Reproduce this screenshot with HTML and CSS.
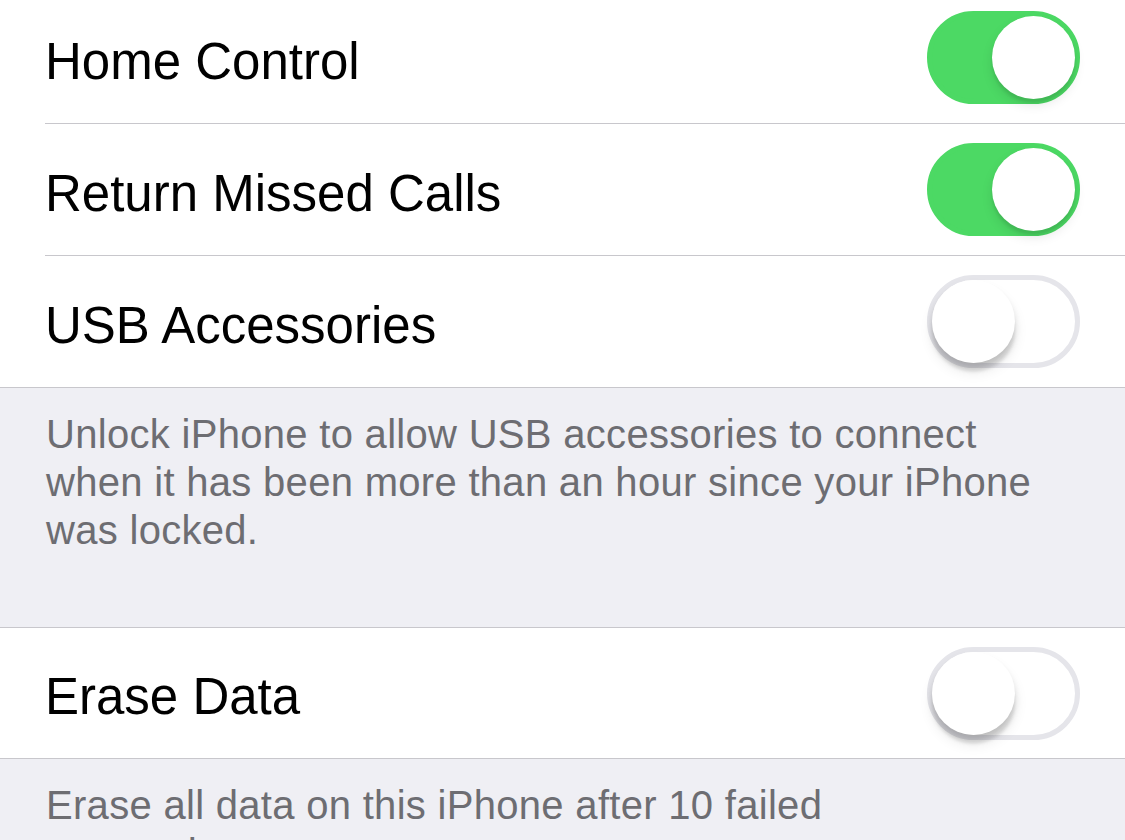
FILE: index.html
```html
<!DOCTYPE html>
<html lang="en">
<head>
<meta charset="utf-8">
<title>Settings</title>
<link rel="stylesheet" href="styles.css">
</head>
<body>
<div class="page">
  <section class="group group-first">
    <div class="row">
      <span class="label">Home Control</span>
      <span class="switch on"><span class="knob"></span></span>
    </div>
    <div class="row">
      <span class="label">Return Missed Calls</span>
      <span class="switch on"><span class="knob"></span></span>
    </div>
    <div class="row">
      <span class="label">USB Accessories</span>
      <span class="switch"><span class="knob"></span></span>
    </div>
  </section>
  <p class="footer footer-gap">Unlock iPhone to allow USB accessories to connect<br>when it has been more than an hour since your iPhone<br>was locked.</p>
  <section class="group">
    <div class="row row-short">
      <span class="label">Erase Data</span>
      <span class="switch"><span class="knob"></span></span>
    </div>
  </section>
  <p class="footer">Erase all data on this iPhone after 10 failed<br>passcode attempts.</p>
</div>
</body>
</html>
```

FILE: styles.css
```css
html, body {
  margin: 0;
  padding: 0;
  background: #efeff4;
}

body {
  width: 1125px;
  height: 840px;
  overflow: hidden;
  font-family: "Liberation Sans", Arial, sans-serif;
}

.page {
  display: flex;
  flex-direction: column;
}

.group {
  background: #ffffff;
  border-top: 1px solid #c8c7cc;
  border-bottom: 1px solid #c8c7cc;
  padding-left: 45px;
}

.group-first {
  margin-top: -8px;
  border-top: none;
}

.row {
  height: 131px;
  display: flex;
  align-items: center;
  justify-content: space-between;
  padding-right: 45px;
  border-bottom: 1px solid #c8c7cc;
}

.row:last-child {
  border-bottom: none;
}

.row-short {
  height: 130px;
}

.label {
  font-size: 51px;
  line-height: 60px;
  color: #000000;
  padding-top: 8px;
}

.switch {
  position: relative;
  width: 153px;
  height: 93px;
  border-radius: 47px;
  box-sizing: border-box;
  background: #ffffff;
  border: 5px solid #e5e5ea;
  flex: none;
}

.switch.on {
  background: #4cd964;
  border-color: #4cd964;
}

.knob {
  position: absolute;
  top: 0;
  left: 0;
  width: 83px;
  height: 83px;
  border-radius: 50%;
  background: #ffffff;
  box-shadow: 0 9px 3px rgba(0, 0, 0, 0.07), 0 6px 6px rgba(0, 0, 0, 0.13), 0 9px 14px rgba(0, 0, 0, 0.09);
}

.switch.on .knob {
  left: auto;
  right: 0;
  box-shadow: 0 4px 3px rgba(0, 0, 0, 0.08), 0 6px 12px rgba(0, 0, 0, 0.10);
}

.footer {
  margin: 0;
  padding: 22px 40px 0 46px;
  font-size: 40px;
  letter-spacing: 0.3px;
  line-height: 48px;
  color: #6d6d72;
  white-space: nowrap;
}

.footer-gap {
  height: 239px;
  box-sizing: border-box;
}
```
